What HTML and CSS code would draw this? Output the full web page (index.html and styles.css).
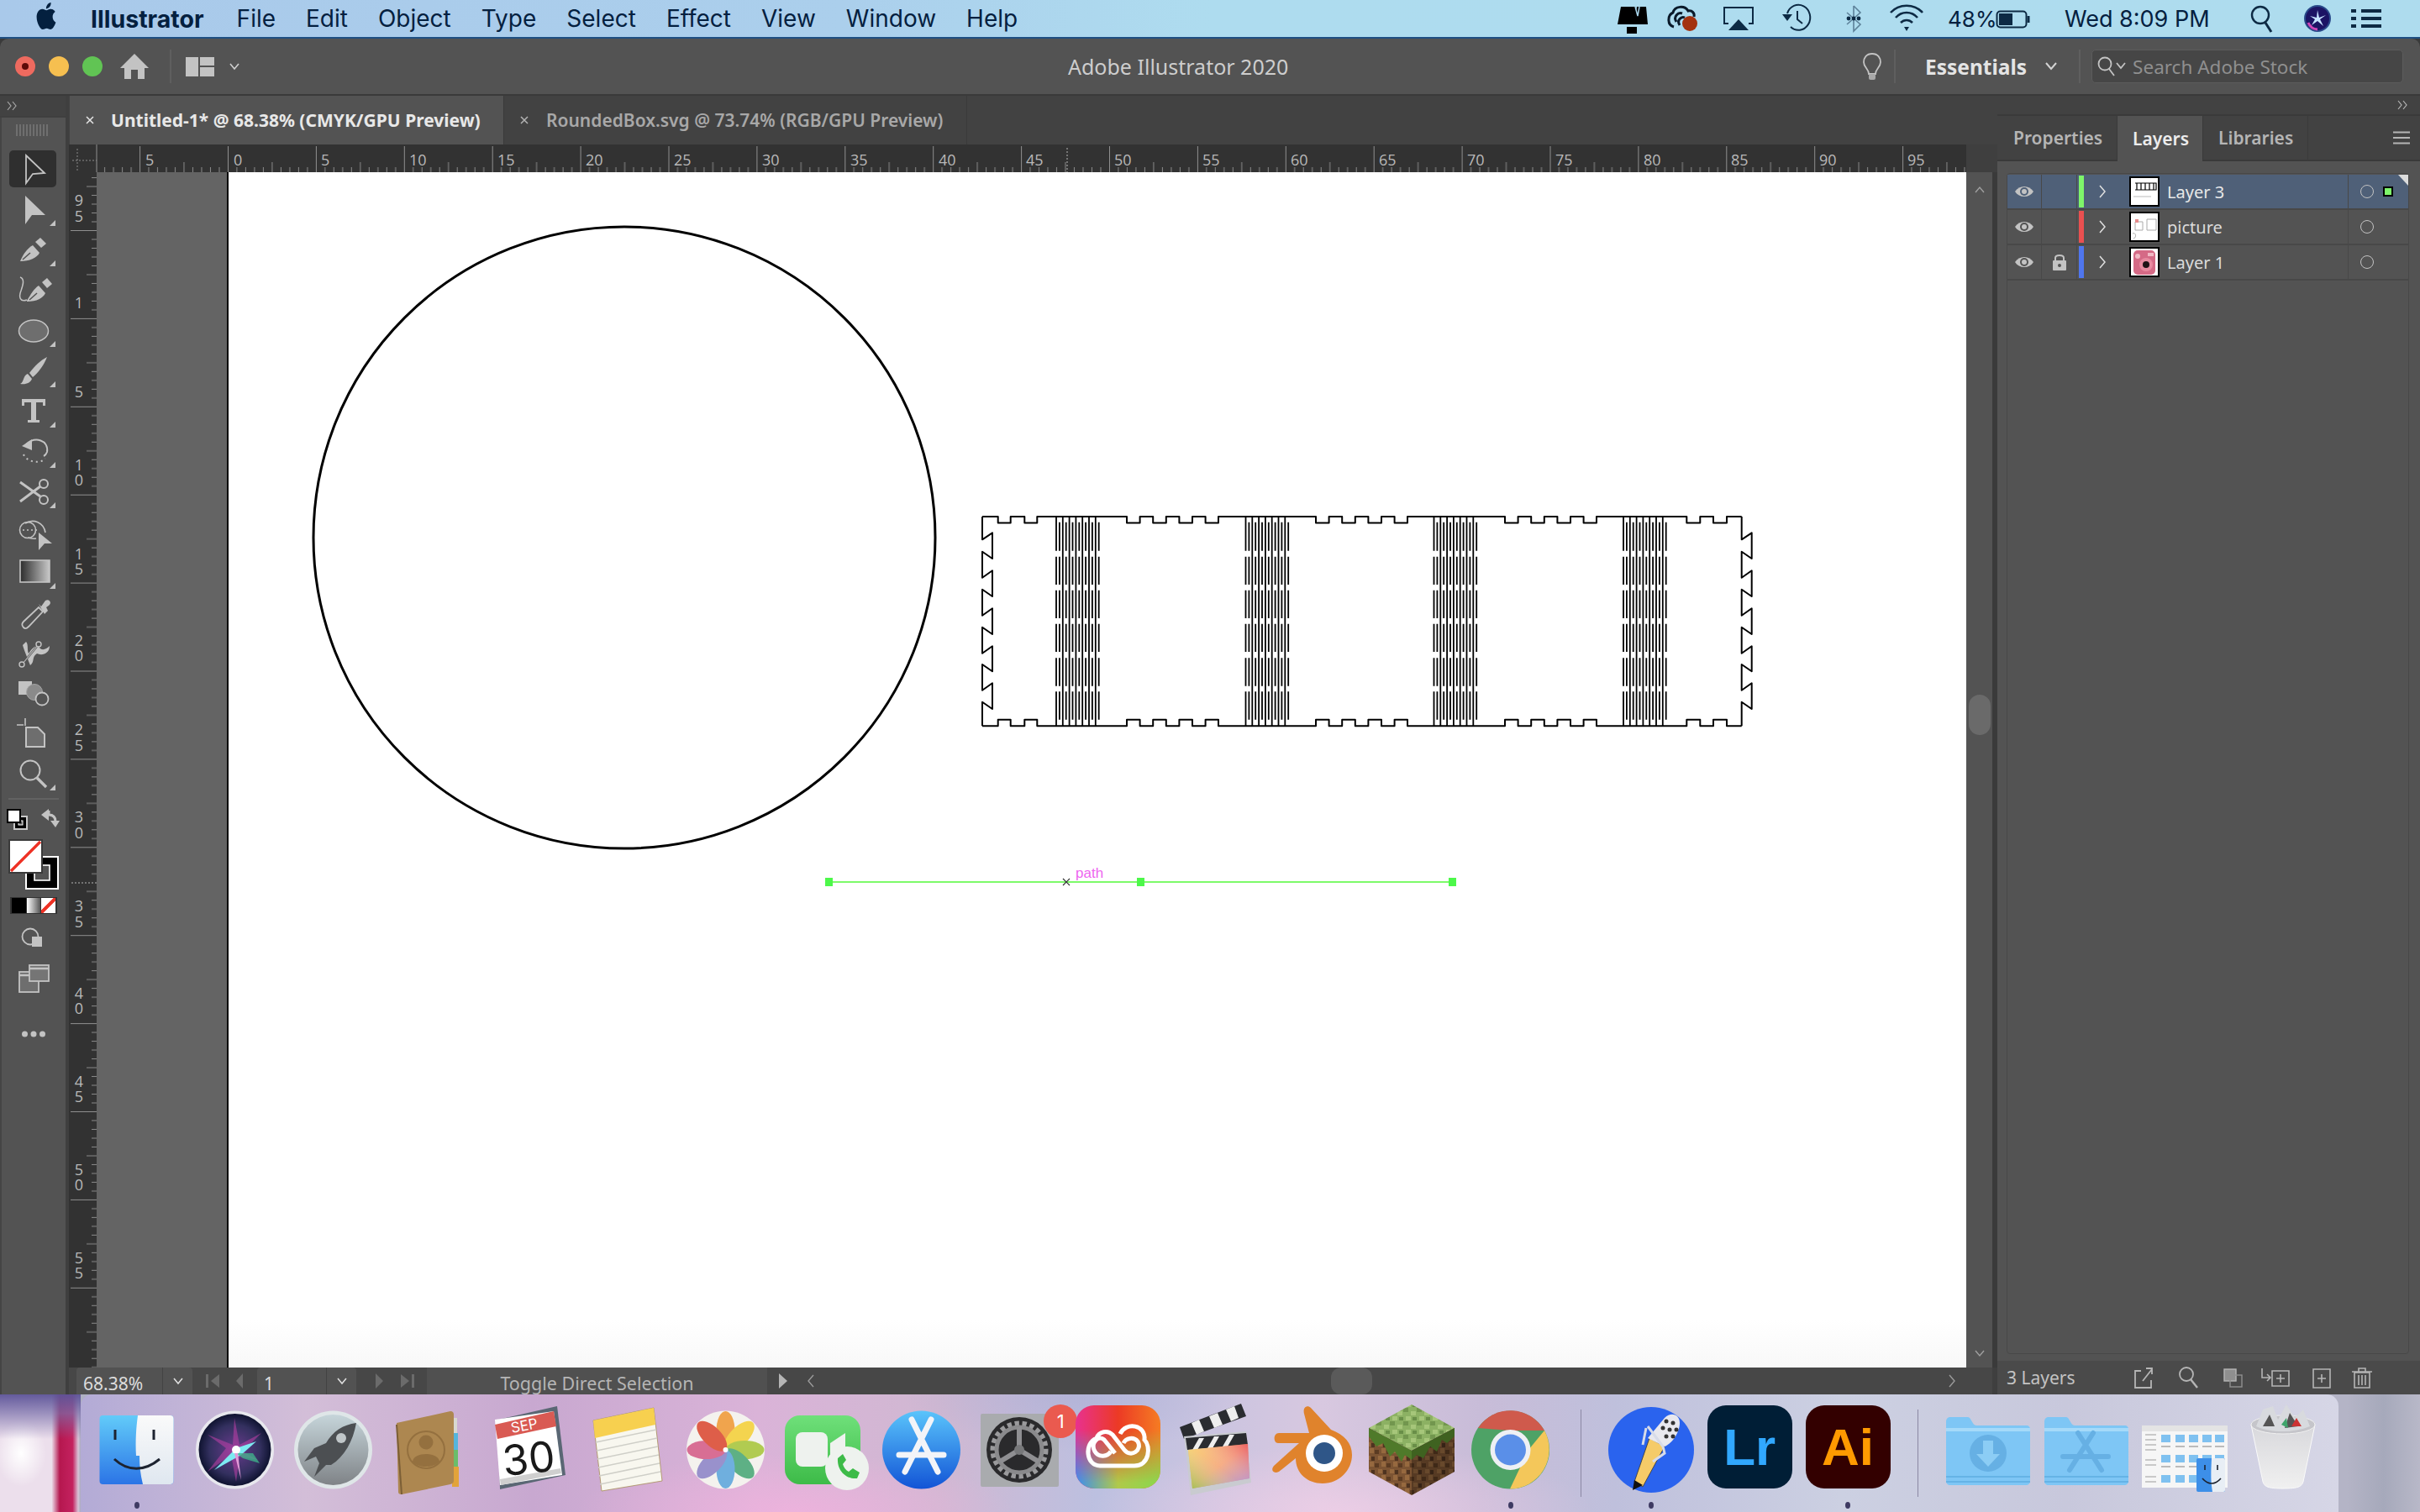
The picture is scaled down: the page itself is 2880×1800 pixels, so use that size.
FILE: index.html
```html
<!DOCTYPE html>
<html lang="en">
<head>
<meta charset="utf-8">
<title>Adobe Illustrator 2020</title>
<link rel="stylesheet" href="styles.css">
</head>
<body>
<svg class="defs" width="0" height="0">
  <defs>
    <symbol id="tri" viewBox="0 0 78 48"><polygon points="59,43 66,43 66,36" fill="#c3c3c3"/></symbol>
    <pattern id="hticks" x="271" y="172" width="104.9" height="33" patternUnits="userSpaceOnUse">
      <path d="M.5 2V33" stroke="#8f8f8f" fill="none"/>
      <path d="M10.9 27V33M21.4 27V33M31.9 27V33M42.4 27V33M52.9 21V33M63.4 27V33M73.9 27V33M84.4 27V33M94.9 27V33" stroke="#8a8a8a" fill="none"/>
    </pattern>
    <pattern id="vticks" x="82" y="274" width="33" height="104.9" patternUnits="userSpaceOnUse">
      <path d="M2 .5H33" stroke="#8f8f8f" fill="none"/>
      <path d="M27 10.9H33M27 21.4H33M27 31.9H33M27 42.4H33M21 52.9H33M27 63.4H33M27 73.9H33M27 84.4H33M27 94.9H33" stroke="#8a8a8a" fill="none"/>
    </pattern>
    <linearGradient id="toolgrad"><stop offset="0" stop-color="#2c2c2c"/><stop offset="1" stop-color="#c8c8c8"/></linearGradient>
  </defs>
</svg>

<header class="menubar">
  <svg class="apple" viewBox="0 0 24 24" width="28" height="32" preserveAspectRatio="none"><path fill="#04203f" d="M12.152 6.896c-.948 0-2.415-1.078-3.96-1.04-2.04.027-3.91 1.183-4.961 3.014-2.117 3.675-.546 9.103 1.519 12.09 1.013 1.454 2.208 3.09 3.792 3.039 1.52-.065 2.09-.987 3.935-.987 1.831 0 2.35.987 3.96.948 1.637-.026 2.676-1.48 3.676-2.948 1.156-1.688 1.636-3.325 1.662-3.415-.039-.013-3.182-1.221-3.22-4.857-.026-3.04 2.48-4.494 2.597-4.559-1.429-2.09-3.623-2.324-4.39-2.376-2-.156-3.675 1.09-4.61 1.09zM15.53 3.83c.843-1.012 1.4-2.427 1.245-3.83-1.207.052-2.662.805-3.532 1.818-.78.896-1.454 2.338-1.273 3.714 1.338.104 2.715-.688 3.559-1.701"/></svg>
  <nav class="menu">
    <span class="menu-app">Illustrator</span><span>File</span><span>Edit</span><span>Object</span><span>Type</span><span>Select</span><span>Effect</span><span>View</span><span>Window</span><span>Help</span>
  </nav>
  <div class="status-items">
    <svg width="62" height="44" viewBox="-31 -22 62 44"><path d="M-13-14H5L6-8V-14H17L19 7H-17Z" fill="#000"/><path d="M4-14L7-3 9-14" stroke="#a9d6ec" stroke-width="1.5" fill="none"/><rect x="-6" y="10" width="12" height="8" fill="#000"/></svg>
    <svg width="63" height="44" viewBox="-31 -22 63 44"><path d="M-12 10C-20 8-20-4-13-7-11-15 1-16 5-9 10-10 13-6 12-2" fill="none" stroke="#0a1a2a" stroke-width="3"/><path d="M-9 4C-13-2-7-8-2-6M-5 8C-9 2-3-3 1-1" fill="none" stroke="#0a1a2a" stroke-width="3"/><circle cx="7" cy="6" r="9" fill="#a3320f"/></svg>
    <svg width="67" height="44" viewBox="-33 -22 67 44"><path d="M-12 6H-17V-13H17V6H12" fill="none" stroke="#0d2a44" stroke-width="2"/><polygon points="0,1 12,14 -12,14" fill="#0d2a44"/></svg>
    <svg width="70" height="44" viewBox="-35 -22 70 44"><path d="M-11-6A14 15 0 1 1-7 10" fill="none" stroke="#0d2a44" stroke-width="2"/><polygon points="-17,-5 -5,-5 -11,3" fill="#0d2a44"/><path d="M1-9V1L7 6" fill="none" stroke="#0d2a44" stroke-width="2"/></svg>
    <svg width="66" height="44" viewBox="-33 -22 66 44"><path d="M0-15V15L8 7-8-7M0-15L8-7-8 7" fill="none" stroke="#5d8199" stroke-width="1.6"/><circle cx="-6" cy="0" r="2.4" fill="#0d2a44"/><circle cx="0" cy="0" r="2.4" fill="#0d2a44"/><circle cx="6" cy="0" r="2.4" fill="#0d2a44"/></svg>
    <svg width="60" height="44" viewBox="-30 -22 60 44"><path d="M-19-7C-9-18 9-18 19-7M-13-1C-6-9 6-9 13-1M-7 5C-3 1 3 1 7 5" fill="none" stroke="#0d2a44" stroke-width="2.6"/><polygon points="-3,10 3,10 0,15" fill="#0d2a44"/></svg>
    <span class="batt-pct">48%</span>
    <svg class="batt" width="42" height="26" viewBox="0 0 42 26"><rect x="1.5" y="4.5" width="35" height="19" rx="4" fill="none" stroke="#0d2a44" stroke-width="2"/><rect x="4" y="7" width="16" height="14" fill="#0d2a44"/><path d="M39 10V18" stroke="#0d2a44" stroke-width="3"/></svg>
    <span class="clock">Wed 8:09 PM</span>
    <svg width="64" height="44" viewBox="-32 -22 64 44"><circle cx="-2" cy="-4" r="10" fill="none" stroke="#0d2a44" stroke-width="2.4"/><path d="M4 5L11 16" stroke="#0d2a44" stroke-width="3"/></svg>
    <svg width="68" height="44" viewBox="-34 -22 68 44"><circle r="15" fill="#1c1464"/><circle r="15" fill="none" stroke="#2a4a8a" stroke-width="2"/><path d="M0-10L2-1 10-4 3 1 7 9 0 3-7 8-3 1-9-3-1-1Z" fill="#c6e4ff"/><path d="M-11 5A13 13 0 0 0 0 13" stroke="#d046b8" stroke-width="3" fill="none"/></svg>
    <svg width="48" height="44" viewBox="-24 -22 48 44"><path d="M-6-9H18M-6 0H18M-6 9H18" stroke="#0d2a44" stroke-width="4"/><path d="M-18-9H-12M-18 0H-12M-18 9H-12" stroke="#0d2a44" stroke-width="4"/></svg>
  </div>
</header>

<div class="window">
  <div class="toolbar">
    <div class="lights"><i class="light red"></i><i class="light yellow"></i><i class="light green"></i></div>
    <svg class="home" width="38" height="32" viewBox="0 0 38 32"><path d="M19 1L36 18H31V31H23V20H15V31H7V18H2Z" fill="#c3c3c3"/></svg>
    <i class="bar-div"></i>
    <svg class="arrange" width="34" height="23" viewBox="0 0 34 23"><path d="M0 0H15V23H0ZM17 0H34V10H17ZM17 12H34V23H17Z" fill="#c3c3c3"/></svg>
    <svg class="chev-s" width="14" height="10" viewBox="0 0 14 10"><path d="M2 2L7 8 12 2" fill="none" stroke="#cfcfcf" stroke-width="1.6"/></svg>
    <div class="app-title">Adobe Illustrator 2020</div>
    <svg class="bulb" width="24" height="34" viewBox="0 0 24 34"><path d="M12 2C5 2 2 7 2 12C2 18 8 20 8 26H16C16 20 22 18 22 12C22 7 19 2 12 2Z" fill="none" stroke="#c3c3c3" stroke-width="1.8"/><rect x="8" y="26" width="8" height="7" rx="2" fill="#a9a9a9"/></svg>
    <i class="bar-div bulb-div"></i>
    <span class="workspace-name">Essentials</span>
    <svg class="ws-chev" width="16" height="12" viewBox="0 0 16 12"><path d="M2 2L8 9 14 2" fill="none" stroke="#d4d4d4" stroke-width="2"/></svg>
    <i class="bar-div ws-div"></i>
    <div class="stock">
      <svg width="36" height="28" viewBox="0 0 36 28"><circle cx="10" cy="11" r="7.5" fill="none" stroke="#c3c3c3" stroke-width="1.8"/><path d="M15 17L21 25M24 10L29 16 34 10" fill="none" stroke="#c3c3c3" stroke-width="1.8"/></svg>
      <span>Search Adobe Stock</span>
    </div>
  </div>

  <div class="workspace">
    <aside class="toolstrip">
      <div class="strip-head">
        <svg width="14" height="14" viewBox="0 0 14 14"><path d="M2 2L6 7 2 12M8 2L12 7 8 12" fill="none" stroke="#a8a8a8" stroke-width="1.2"/></svg>
      </div>
      <div class="tools">
        <svg class="grip" width="40" height="14" viewBox="0 0 40 14"><path d="M1 0V14M5 0V14M9 0V14M13 0V14M17 0V14M21 0V14M25 0V14M29 0V14M33 0V14M37 0V14" stroke="#7c7c7c" stroke-width="1.4"/></svg>
        <div class="tool active"><svg viewBox="0 0 78 48" width="78" height="48"><path d="M31 7L53 28 39 29 31 40Z" fill="none" stroke="#c3c3c3" stroke-width="1.8"/></svg></div>
        <div class="tool"><svg viewBox="0 0 78 48" width="78" height="48"><path d="M30 7L54 30 38 30 30 41Z" fill="#c3c3c3"/><use href="#tri"/></svg></div>
        <div class="tool"><svg viewBox="0 0 78 48" width="78" height="48"><path d="M24 37C28 28 32 22 39 18L47 27C44 33 35 37 24 37Z" fill="#c3c3c3"/><path d="M27 35L36 27" stroke="#535353" stroke-width="1.5"/><path d="M42 14L48 9 55 16 49 21Z" fill="#c3c3c3"/><use href="#tri"/></svg></div>
        <div class="tool"><svg viewBox="0 0 78 48" width="78" height="48"><path d="M32 36C37 28 40 22 46 18L54 27C51 33 44 37 32 37Z" fill="#c3c3c3"/><path d="M35 35L44 27" stroke="#535353" stroke-width="1.5"/><path d="M50 14L56 9 62 16 56 21Z" fill="#c3c3c3"/><path d="M24 8C30 10 27 18 25 24 22 32 24 38 32 35" fill="none" stroke="#c3c3c3" stroke-width="1.5"/></svg></div>
        <div class="tool"><svg viewBox="0 0 78 48" width="78" height="48"><ellipse cx="40" cy="24" rx="17.5" ry="13" fill="#6e6e6e" stroke="#c3c3c3" stroke-width="1.5"/><use href="#tri"/></svg></div>
        <div class="tool"><svg viewBox="0 0 78 48" width="78" height="48"><path d="M56 7C52 17 46 25 39 31L35 26C41 18 48 11 56 7Z" fill="#c3c3c3"/><path d="M24 39C29 37 27 29 33 27L38 33C36 38 31 40 24 39Z" fill="#c3c3c3"/><use href="#tri"/></svg></div>
        <div class="tool"><svg viewBox="0 0 78 48" width="78" height="48"><path d="M26 9H54V17H51V13H43V34H47V37H33V34H37V13H29V17H26Z" fill="#c3c3c3"/><use href="#tri"/></svg></div>
        <div class="tool"><svg viewBox="0 0 78 48" width="78" height="48"><path d="M31 15C42 5 58 10 56 24 55 27 54 28 52 29" fill="none" stroke="#c3c3c3" stroke-width="2"/><polygon points="26,17 38,9 38,22" fill="#c3c3c3"/><path d="M28 27C32 36 47 39 54 32" fill="none" stroke="#c3c3c3" stroke-width="2" stroke-dasharray="2 4"/><use href="#tri"/></svg></div>
        <div class="tool"><svg viewBox="0 0 78 48" width="78" height="48"><circle cx="52" cy="14" r="5" fill="none" stroke="#c3c3c3" stroke-width="2"/><circle cx="52" cy="33" r="5" fill="none" stroke="#c3c3c3" stroke-width="2"/><path d="M24 12L48 29M24 35L48 17" stroke="#c3c3c3" stroke-width="3"/><use href="#tri"/></svg></div>
        <div class="tool"><svg viewBox="0 0 78 48" width="78" height="48"><circle cx="33" cy="21" r="9.5" fill="none" stroke="#c3c3c3" stroke-width="1.6"/><path d="M30 13C40 7 52 12 54 24M43 31C38 32 34 30 33 30" fill="none" stroke="#c3c3c3" stroke-width="1.6"/><path d="M27 21H45" stroke="#c3c3c3" stroke-width="1.5" stroke-dasharray="2 3"/><path d="M46 24L62 37 53 37 46 45Z" fill="#c3c3c3"/></svg></div>
        <div class="tool"><svg viewBox="0 0 78 48" width="78" height="48"><rect x="24" y="9" width="35" height="26" fill="url(#toolgrad)" stroke="#c3c3c3" stroke-width="1.6"/><use href="#tri"/></svg></div>
        <div class="tool"><svg viewBox="0 0 78 48" width="78" height="48"><path d="M28 41C25 38 26 36 28 34L46 17 51 22 34 40C32 42 30 43 28 41Z" fill="none" stroke="#c3c3c3" stroke-width="1.8"/><path d="M46 13L49 16 54 9C57 7 60 9 60 12 59 15 56 16 55 17L57 21 53 25Z" fill="#c3c3c3"/></svg></div>
        <div class="tool"><svg viewBox="0 0 78 48" width="78" height="48"><path d="M31 10C34 13 32 19 34 24 38 18 43 12 47 17 50 21 55 19 59 15 59 24 50 27 44 24 37 29 42 33 36 38 32 28 28 18 27 14Z" fill="#c3c3c3"/><path d="M27 36L46 13" stroke="#535353" stroke-width="2.4"/><path d="M27 36L46 13" stroke="#c3c3c3" stroke-width="1.1"/><circle cx="26" cy="37" r="3" fill="#535353" stroke="#c3c3c3" stroke-width="1.4"/><circle cx="46" cy="13" r="3" fill="#535353" stroke="#c3c3c3" stroke-width="1.4"/></svg></div>
        <div class="tool"><svg viewBox="0 0 78 48" width="78" height="48"><rect x="22" y="9" width="16" height="16" fill="#c3c3c3"/><circle cx="41" cy="22" r="9.5" fill="#8a8a8a" stroke="#a5a5a5" stroke-width="1"/><circle cx="50" cy="30" r="7.5" fill="#535353" stroke="#c3c3c3" stroke-width="1.8"/></svg></div>
        <div class="tool"><svg viewBox="0 0 78 48" width="78" height="48"><path d="M31 16H45L53 24V39H31Z" fill="#6e6e6e" stroke="#c3c3c3" stroke-width="2"/><path d="M30 5V14M20 13H28" stroke="#c3c3c3" stroke-width="1.6"/></svg></div>
        <div class="tool"><svg viewBox="0 0 78 48" width="78" height="48"><circle cx="36" cy="19" r="11.5" fill="none" stroke="#c3c3c3" stroke-width="2"/><path d="M44 28L55 39" stroke="#c3c3c3" stroke-width="3.4"/><use href="#tri"/></svg></div>
        <i class="tool-sep"></i>
        <div class="swap-row">
          <svg width="26" height="26" viewBox="0 0 26 26"><rect x="9" y="9" width="15" height="15" fill="#000" stroke="#c8c8c8" stroke-width="2"/><rect x="14" y="14" width="5" height="5" fill="#535353" stroke="#fff" stroke-width="1"/><rect x="1" y="1" width="15" height="15" fill="#fff" stroke="#000" stroke-width="2"/></svg>
          <svg width="24" height="24" viewBox="0 0 24 24"><path d="M10 2V7C16 7 18 10 18 15" fill="none" stroke="#c3c3c3" stroke-width="3"/><path d="M1 7L10 0V14ZM12 14H23L18 22Z" fill="#c3c3c3"/></svg>
        </div>
        <div class="fillstroke">
          <svg width="60" height="60" viewBox="0 0 60 60"><rect x="21" y="21" width="38" height="38" fill="#000" stroke="#fff" stroke-width="2"/><rect x="31" y="31" width="18" height="18" fill="#535353" stroke="#fff" stroke-width="1.6"/><rect x="1" y="1" width="39" height="39" fill="#fff" stroke="#3a3a3a" stroke-width="2"/><path d="M3 38L38 3" stroke="#ee3124" stroke-width="3.4"/></svg>
        </div>
        <div class="colormodes"><i class="cm cm-black"></i><i class="cm cm-grad"></i><i class="cm cm-none"></i></div>
        <div class="tool small"><svg viewBox="0 0 78 48" width="78" height="48"><circle cx="36" cy="22" r="9.5" fill="none" stroke="#c3c3c3" stroke-width="1.8"/><rect x="38" y="22" width="12" height="12" fill="#c3c3c3"/></svg></div>
        <div class="tool"><svg viewBox="0 0 78 48" width="78" height="48"><rect x="23" y="16" width="23" height="24" fill="#6e6e6e" stroke="#c3c3c3" stroke-width="1.8"/><rect x="35" y="8" width="23" height="19" fill="#757575" stroke="#c3c3c3" stroke-width="1.8"/><path d="M35 12H58M23 20H35" stroke="#c3c3c3" stroke-width="2.5"/></svg></div>
        <div class="tool dots"><svg viewBox="0 0 78 48" width="78" height="48"><circle cx="29.500" cy="24" r="3.500" fill="#c3c3c3"/><circle cx="40" cy="24" r="3.500" fill="#c3c3c3"/><circle cx="50.500" cy="24" r="3.500" fill="#c3c3c3"/></svg></div>
      </div>
    </aside>

    <section class="doc">
      <div class="tabs">
        <div class="tab tab-active">
          <svg width="12" height="12" viewBox="0 0 12 12"><path d="M2 2L10 10M10 2L2 10" stroke="#e6e6e6" stroke-width="1.5"/></svg>
          <span>Untitled-1* @ 68.38% (CMYK/GPU Preview)</span>
        </div>
        <div class="tab tab-idle">
          <svg width="12" height="12" viewBox="0 0 12 12"><path d="M2 2L10 10M10 2L2 10" stroke="#b5b5b5" stroke-width="1.5"/></svg>
          <span>RoundedBox.svg @ 73.74% (RGB/GPU Preview)</span>
        </div>
      </div>
      <svg class="hruler" width="2258" height="33" viewBox="82 172 2258 33">
        <rect x="82" y="172" width="2258" height="33" fill="#323232"/>
        <rect x="115" y="172" width="2225" height="33" fill="url(#hticks)"/>
        <rect x="82" y="172" width="33" height="33" fill="#323232"/>
        <path d="M92 177V205M86 191H115" stroke="#8a8a8a" stroke-dasharray="2 2" fill="none"/>
        <path d="M115 172V205" stroke="#8f8f8f"/>
        <path d="M1270 172V205" stroke="#323232" stroke-width="2"/>
        <path d="M1270 176V205" stroke="#b5b5b5" stroke-dasharray="2 2"/>
        <g class="rlabels">
          <text x="173" y="197">5</text><text x="278" y="197">0</text><text x="382" y="197">5</text><text x="487" y="197">10</text><text x="592" y="197">15</text><text x="697" y="197">20</text><text x="802" y="197">25</text><text x="907" y="197">30</text><text x="1012" y="197">35</text><text x="1117" y="197">40</text><text x="1221" y="197">45</text><text x="1326" y="197">50</text><text x="1431" y="197">55</text><text x="1536" y="197">60</text><text x="1641" y="197">65</text><text x="1746" y="197">70</text><text x="1851" y="197">75</text><text x="1956" y="197">80</text><text x="2060" y="197">85</text><text x="2165" y="197">90</text><text x="2270" y="197">95</text>
        </g>
      </svg>
      <div class="canvas-row">
        <svg class="vruler" width="33" height="1423" viewBox="82 205 33 1423">
          <rect x="82" y="205" width="33" height="1423" fill="#323232"/>
          <rect x="82" y="205" width="33" height="1423" fill="url(#vticks)"/>
          <path d="M82 1051H115" stroke="#323232" stroke-width="2"/>
          <path d="M85 1051H115" stroke="#b5b5b5" stroke-dasharray="2 2"/>
          <g class="rlabels rlabels-v">
            <text x="94" y="245">9</text><text x="94" y="264">5</text>
            <text x="94" y="367">1</text>
            <text x="94" y="473">5</text>
            <text x="94" y="560">1</text><text x="94" y="578">0</text>
            <text x="94" y="666">1</text><text x="94" y="684">5</text>
            <text x="94" y="769">2</text><text x="94" y="787">0</text>
            <text x="94" y="875">2</text><text x="94" y="894">5</text>
            <text x="94" y="979">3</text><text x="94" y="998">0</text>
            <text x="94" y="1085">3</text><text x="94" y="1104">5</text>
            <text x="94" y="1189">4</text><text x="94" y="1207">0</text>
            <text x="94" y="1294">4</text><text x="94" y="1312">5</text>
            <text x="94" y="1399">5</text><text x="94" y="1417">0</text>
            <text x="94" y="1504">5</text><text x="94" y="1522">5</text>
          </g>
        </svg>
        <div class="pasteboard"></div>
        <div class="artboard">
          <svg width="2068" height="1423" viewBox="272 205 2068 1423">
            <defs>
              <path id="bcol" d="M1260.900 621.700V655.700M1260.900 662.700V696M1260.900 702.700V736M1260.900 742.700V776M1260.900 783.300V816.700M1260.900 823.300V856.800"/>
              <g id="hinge">
                <path d="M1257 615V655.700M1257 662.700V696M1257 702.700V736M1257 742.700V776M1257 783.300V816.700M1257 823.300V864.300M1264.800 615V864.300M1272.600 615V864.300M1280.400 615V864.300M1288.200 615V864.300M1296 615V864.300M1303.800 615V864.300"/>
                <use href="#bcol"/><use href="#bcol" x="7.800"/><use href="#bcol" x="15.600"/><use href="#bcol" x="23.400"/><use href="#bcol" x="31.200"/><use href="#bcol" x="39"/><use href="#bcol" x="46.800"/>
              </g>
              <path id="wave" d="M1169 615V642.300L1181 634.300V665L1169 656.700V687.700L1181 679.300V710L1169 701.700V732.700L1181 724.300V755L1169 746.700V777.700L1181 769.300V799.300L1169 791V821.700L1181 813.300V844L1169 835.700V864.300"/>
            </defs>
            <circle cx="743" cy="640" r="370" fill="none" stroke="#000" stroke-width="3"/>
            <g class="art-lines">
              <path d="M1169 615H1187.700V622.500H1202.700V615H1219.300V622.500H1234.300V615H1341V622.500H1356.600V615H1372.200V622.500H1387.800V615H1403.400V622.500H1419V615H1434.600V622.500H1450V615H1566V622.500H1581.600V615H1597.200V622.500H1612.800V615H1628.400V622.500H1644V615H1659.600V622.500H1675V615H1791V622.500H1806.600V615H1822.200V622.500H1837.800V615H1853.400V622.500H1869V615H1884.600V622.500H1900V615H2007.300V622.500H2023.300V615H2039V622.500H2055V615H2072.700"/>
              <path d="M1169 864.300H1187.700V856.800H1202.700V864.300H1219.300V856.800H1234.300V864.300H1341V856.800H1356.600V864.300H1372.200V856.800H1387.800V864.300H1403.400V856.800H1419V864.300H1434.600V856.800H1450V864.300H1566V856.800H1581.600V864.300H1597.200V856.800H1612.800V864.300H1628.400V856.800H1644V864.300H1659.600V856.800H1675V864.300H1791V856.800H1806.600V864.300H1822.200V856.800H1837.800V864.300H1853.400V856.800H1869V864.300H1884.600V856.800H1900V864.300H2007.300V856.800H2023.300V864.300H2039V856.800H2055V864.300H2072.700"/>
              <use href="#wave"/>
              <use href="#wave" x="903.700"/>
              <g class="hinges"><use href="#hinge"/><use href="#hinge" x="225.500"/><use href="#hinge" x="449.500"/><use href="#hinge" x="675"/></g>
            </g>
            <path d="M987 1050H1728" stroke="#7dfa6a" stroke-width="2"/>
            <path d="M982 1045H991V1055H982ZM1353 1045H1362V1055H1353ZM1724 1045H1733V1055H1724Z" fill="#4df84a"/>
            <path d="M1265 1046L1273 1054M1273 1046L1265 1054" stroke="#333" stroke-width="1.200"/>
            <text class="smart-label" x="1280" y="1045">path</text>
          </svg>
        </div>
        <div class="vscroll">
          <svg width="14" height="10" viewBox="0 0 14 10"><path d="M2 8L7 2 12 8" fill="none" stroke="#a0a0a0" stroke-width="1.4"/></svg>
          <i class="vthumb"></i>
          <svg width="14" height="10" viewBox="0 0 14 10"><path d="M2 2L7 8 12 2" fill="none" stroke="#a0a0a0" stroke-width="1.4"/></svg>
        </div>
      </div>
      <div class="statusbar">
        <div class="field field-zoom"><span>68.38%</span></div>
        <div class="field-dd"><svg width="14" height="10" viewBox="0 0 14 10"><path d="M2 2L7 8 12 2" fill="none" stroke="#e0e0e0" stroke-width="1.500"/></svg></div>
        <svg class="nav-a" width="50" height="20" viewBox="0 0 50 20"><path d="M0 2H3V18H0ZM16 2V18L6 10ZM44 1V19L36 10Z" fill="#6b6b6b"/></svg>
        <div class="field field-page"><span>1</span></div>
        <div class="field-dd"><svg width="14" height="10" viewBox="0 0 14 10"><path d="M2 2L7 8 12 2" fill="none" stroke="#e0e0e0" stroke-width="1.500"/></svg></div>
        <svg class="nav-b" width="50" height="20" viewBox="0 0 50 20"><path d="M1 1V19L10 10ZM31 2V18L41 10ZM44 2H47V18H44Z" fill="#6b6b6b"/></svg>
        <div class="status-msg">Toggle Direct Selection</div>
        <svg class="msg-arrow" width="12" height="20" viewBox="0 0 12 20"><path d="M1 1V19L11 10Z" fill="#b5b5b5"/></svg>
        <svg class="hs-left" width="10" height="18" viewBox="0 0 10 18"><path d="M8 2L2 9 8 16" fill="none" stroke="#9a9a9a" stroke-width="1.400"/></svg>
        <div class="hscroll"><i class="hthumb"></i></div>
        <svg class="hs-right" width="10" height="18" viewBox="0 0 10 18"><path d="M2 2L8 9 2 16" fill="none" stroke="#9a9a9a" stroke-width="1.400"/></svg>
      </div>
    </section>

    <aside class="panels">
      <div class="panel-head">
        <svg width="14" height="14" viewBox="0 0 14 14"><path d="M2 2L6 7 2 12M8 2L12 7 8 12" fill="none" stroke="#b5b5b5" stroke-width="1.200"/></svg>
      </div>
      <div class="panel-tabs">
        <span class="ptab">Properties</span>
        <span class="ptab ptab-active">Layers</span>
        <span class="ptab ptab-lib">Libraries</span>
        <svg class="pmenu" width="20" height="16" viewBox="0 0 20 16"><path d="M0 1.500H20M0 8H20M0 14.500H20" stroke="#b5b5b5" stroke-width="1.800"/></svg>
      </div>
      <div class="layers">
        <div class="layer layer-sel">
          <div class="cell"><svg width="24" height="16" viewBox="0 0 24 16"><path d="M1 8C6 0 18 0 23 8 18 16 6 16 1 8Z" fill="#c3c3c3"/><circle cx="12" cy="8" r="5" fill="#4f6078"/><circle cx="12" cy="8" r="3" fill="#c3c3c3"/></svg></div>
          <div class="cell"></div>
          <div class="cell cell-tw"><i class="swatch sw-green"></i><svg width="10" height="18" viewBox="0 0 10 18"><path d="M2 2L8 9 2 16" fill="none" stroke="#e0e0e0" stroke-width="1.500"/></svg></div>
          <svg class="thumb" width="36" height="36" viewBox="0 0 36 36"><rect width="36" height="36" fill="#000"/><rect x="2" y="2" width="32" height="32" fill="#fff"/><path d="M7 8H32V16H7M9 8V16M14 8V16M19 8V16M24 8V16M29 8V16" fill="none" stroke="#000" stroke-width="1.200"/><path d="M5 24H26" stroke="#bbb"/></svg>
          <span class="lname">Layer 3</span>
          <div class="cell cell-target"><i class="target"></i><i class="sel-mark"></i></div>
          <i class="corner"></i>
        </div>
        <div class="layer">
          <div class="cell"><svg width="24" height="16" viewBox="0 0 24 16"><path d="M1 8C6 0 18 0 23 8 18 16 6 16 1 8Z" fill="#c3c3c3"/><circle cx="12" cy="8" r="5" fill="#535353"/><circle cx="12" cy="8" r="3" fill="#c3c3c3"/></svg></div>
          <div class="cell"></div>
          <div class="cell cell-tw"><i class="swatch sw-red"></i><svg width="10" height="18" viewBox="0 0 10 18"><path d="M2 2L8 9 2 16" fill="none" stroke="#e0e0e0" stroke-width="1.500"/></svg></div>
          <svg class="thumb" width="36" height="36" viewBox="0 0 36 36"><rect width="36" height="36" fill="#000"/><rect x="2" y="2" width="32" height="32" fill="#fff"/><path d="M7 12H16V22H7ZM21 9H32V22H21ZM4 26C8 24 9 31 5 32" fill="none" stroke="#aaa"/><rect x="7" y="9" width="4" height="4" fill="#e58a8a"/></svg>
          <span class="lname">picture</span>
          <div class="cell cell-target"><i class="target"></i></div>
        </div>
        <div class="layer">
          <div class="cell"><svg width="24" height="16" viewBox="0 0 24 16"><path d="M1 8C6 0 18 0 23 8 18 16 6 16 1 8Z" fill="#c3c3c3"/><circle cx="12" cy="8" r="5" fill="#535353"/><circle cx="12" cy="8" r="3" fill="#c3c3c3"/></svg></div>
          <div class="cell"><svg width="18" height="22" viewBox="0 0 18 22"><path d="M4 10V6C4 2 14 2 14 6V10" fill="none" stroke="#c3c3c3" stroke-width="2"/><rect x="1" y="9" width="16" height="12" rx="1" fill="#c3c3c3"/><circle cx="9" cy="15" r="2" fill="#535353"/></svg></div>
          <div class="cell cell-tw"><i class="swatch sw-blue"></i><svg width="10" height="18" viewBox="0 0 10 18"><path d="M2 2L8 9 2 16" fill="none" stroke="#e0e0e0" stroke-width="1.500"/></svg></div>
          <svg class="thumb" width="36" height="36" viewBox="0 0 36 36"><rect width="36" height="36" fill="#000"/><rect x="2" y="2" width="32" height="32" fill="#fff"/><rect x="5" y="4" width="26" height="29" rx="5" fill="#d56a86"/><circle cx="20" cy="21" r="8" fill="#e78aa0"/><circle cx="20" cy="21" r="4" fill="#1f1216"/><circle cx="10" cy="11" r="3" fill="#f0b8c4"/><rect x="22" y="7" width="7" height="4" fill="#f0b8c4"/></svg>
          <span class="lname">Layer 1</span>
          <div class="cell cell-target"><i class="target"></i></div>
        </div>
      </div>
      <div class="panel-foot">
        <span>3 Layers</span>
        <svg class="fi" width="53" height="26" viewBox="-26 -13 53 26"><path d="M-3-8H-10V12H9V3M-1 4L10-10M3-11H10V-4" fill="none" stroke="#b5b5b5" stroke-width="1.800"/></svg>
        <svg class="fi" width="53" height="26" viewBox="-26 -13 53 26"><circle cx="-2" cy="-4" r="8" fill="none" stroke="#b5b5b5" stroke-width="1.800"/><path d="M3 2L11 12" stroke="#b5b5b5" stroke-width="2.400"/></svg>
        <svg class="fi" width="53" height="26" viewBox="-26 -13 53 26"><rect x="-10" y="-10" width="14" height="14" fill="#8f8f8f" stroke="#b5b5b5" stroke-width="1.400"/><rect x="-3" y="-3" width="14" height="14" fill="none" stroke="#8f8f8f" stroke-width="1.400"/></svg>
        <svg class="fi" width="53" height="26" viewBox="-26 -13 53 26"><path d="M-18-11V0H-9M-12-4L-8 0-12 4" fill="none" stroke="#b5b5b5" stroke-width="1.600"/><path d="M-6-8H14V10H-6ZM4-4V6M-1 1H9" fill="none" stroke="#b5b5b5" stroke-width="1.600"/></svg>
        <svg class="fi" width="53" height="26" viewBox="-26 -13 53 26"><path d="M-10-10H10V12H-10ZM0-4V6M-5 1H5" fill="none" stroke="#b5b5b5" stroke-width="1.600"/></svg>
        <svg class="fi" width="53" height="26" viewBox="-21 -13 53 26"><path d="M-9-6H9V12H-9ZM-12-7H12M-4-7V-11H4V-7M-4-3V9M0-3V9M4-3V9" fill="none" stroke="#b5b5b5" stroke-width="1.600"/></svg>
      </div>
    </aside>
  </div>
</div>

<footer class="desk">
  <div class="dock">
    <!-- Finder -->
    <div class="app running"><svg viewBox="0 0 117 140" width="117" height="140"><defs><linearGradient id="f1" x1="0" y1="0" x2="0" y2="1"><stop offset="0" stop-color="#62cbf9"/><stop offset="1" stop-color="#2b74e6"/></linearGradient><linearGradient id="f2" x1="0" y1="0" x2="0" y2="1"><stop offset="0" stop-color="#fafafa"/><stop offset="1" stop-color="#dfe7f0"/></linearGradient></defs><rect x="14.500" y="25" width="88" height="82" rx="4" fill="url(#f1)"/><path d="M60 25H98.500C101 25 102.500 26.500 102.500 29V103C102.500 105.500 101 107 98.500 107H66C63 95 62 85 62 73H58C57 55 58 40 60 25Z" fill="url(#f2)"/><path d="M33 42V54M79 42V54" stroke="#1d2330" stroke-width="3"/><path d="M32 77C48 92 68 92 86 77" fill="none" stroke="#1d2330" stroke-width="3"/></svg></div>
    <!-- Siri -->
    <div class="app"><svg viewBox="0 0 117 140" width="117" height="140"><defs><radialGradient id="s1"><stop offset="0" stop-color="#6a3b8e"/><stop offset=".7" stop-color="#33305f"/><stop offset="1" stop-color="#0f1330"/></radialGradient></defs><circle cx="58.500" cy="66" r="46.500" fill="#e8e8ee"/><circle cx="58.500" cy="66" r="43" fill="url(#s1)"/><path d="M58 28L64 60 90 46 68 68 86 78 64 74 60 104 54 72 26 92 48 64 26 48 56 60Z" fill="#c03fa8" opacity=".55"/><path d="M34 90L60 64 84 56 66 72Z" fill="#7deaf2"/><path d="M60 70L80 70 88 82 68 76Z" fill="#3fb08a" opacity=".8"/><circle cx="60" cy="66" r="5" fill="#fff"/><path d="M58 70L66 102 62 70Z" fill="#e29ad8"/></svg></div>
    <!-- Launchpad -->
    <div class="app"><svg viewBox="0 0 117 140" width="117" height="140"><defs><linearGradient id="l1" x1="0" y1="0" x2="0" y2="1"><stop offset="0" stop-color="#c6d5da"/><stop offset="1" stop-color="#7f8387"/></linearGradient></defs><circle cx="58.500" cy="66" r="46.500" fill="#dfe6e8"/><circle cx="58.500" cy="66" r="42" fill="url(#l1)"/><path d="M86 34C70 36 58 44 50 58L36 64 24 80 38 74 42 82 36 98 50 84 56 84C72 74 82 56 86 34Z" fill="#4c4f52"/><circle cx="68" cy="52" r="6" fill="#c0c6c8"/></svg></div>
    <!-- Contacts -->
    <div class="app"><svg viewBox="0 0 117 140" width="117" height="140"><rect x="82" y="28" width="8" height="20" fill="#d8d8d0"/><rect x="84" y="46" width="7" height="22" fill="#56b5dc"/><rect x="84" y="66" width="7" height="22" fill="#6bbd6a"/><rect x="84" y="86" width="8" height="24" fill="#e2a33a"/><path d="M18 34L82 20C85 20 86 22 86 24V102C86 105 85 106 82 107L24 119C21 119 20 118 20 116Z" fill="#ad8750"/><path d="M18 36L24 119" stroke="#7c5f36" stroke-width="2"/><circle cx="53" cy="66" r="22" fill="none" stroke="#94703f" stroke-width="2"/><circle cx="53" cy="57" r="8.500" fill="#94703f"/><path d="M37 80C38 68 68 68 69 80 62 88 44 88 37 80Z" fill="#94703f"/></svg></div>
    <!-- Calendar -->
    <div class="app"><svg viewBox="0 0 117 140" width="117" height="140"><path d="M22 30L92 14 102 96 24 113Z" fill="#5a6774"/><path d="M16 30L86 20 96 96 22 108Z" fill="#fff" transform="translate(2 0)"/><path d="M18 36L88 20 91 38 21 53Z" fill="#d95a53"/><path d="M24 101L96 88 97 94 25 108Z" fill="#cfcfcf"/><text class="cal-month" x="54" y="43" transform="rotate(-11 54 43)">SEP</text><text class="cal-day" x="60" y="94" transform="rotate(-6 60 94)">30</text></svg></div>
    <!-- Notes -->
    <div class="app"><svg viewBox="0 0 117 140" width="117" height="140"><path d="M18 31L90 16 100 103 28 115Z" fill="#f8f7ef" stroke="#a68d58" stroke-width=".8"/><path d="M18 31L90 16 92 36 20 52Z" fill="#f7d04f"/><path d="M21 57L93 42M22 67L94 52M23 77L95 62M24 87L96 72M25 97L97 82M26 107L98 92" stroke="#cfcfc8" stroke-width="1.500"/></svg></div>
    <!-- Photos -->
    <div class="app"><svg viewBox="0 0 117 140" width="117" height="140"><circle cx="58.500" cy="66" r="46.500" fill="#f4f2ee"/><g class="petals"><ellipse cx="58.500" cy="43" rx="11" ry="23" fill="#f09a37"/><ellipse cx="58.500" cy="43" rx="11" ry="23" fill="#f4d03a" transform="rotate(45 58.500 66)"/><ellipse cx="58.500" cy="43" rx="11" ry="23" fill="#a8c63c" transform="rotate(90 58.500 66)"/><ellipse cx="58.500" cy="43" rx="11" ry="23" fill="#4aa777" transform="rotate(135 58.500 66)"/><ellipse cx="58.500" cy="43" rx="11" ry="23" fill="#5da6dc" transform="rotate(180 58.500 66)"/><ellipse cx="58.500" cy="43" rx="11" ry="23" fill="#8d84c8" transform="rotate(225 58.500 66)"/><ellipse cx="58.500" cy="43" rx="11" ry="23" fill="#d55c88" transform="rotate(270 58.500 66)"/><ellipse cx="58.500" cy="43" rx="11" ry="23" fill="#dc4a33" transform="rotate(315 58.500 66)"/></g><circle cx="58.500" cy="66" r="3" fill="#fff"/></svg></div>
    <!-- FaceTime -->
    <div class="app"><svg viewBox="0 0 117 140" width="117" height="140"><defs><linearGradient id="ft" x1="0" y1="0" x2="0" y2="1"><stop offset="0" stop-color="#6fe07a"/><stop offset="1" stop-color="#3dbb48"/></linearGradient></defs><rect x="12" y="25" width="90" height="82" rx="18" fill="url(#ft)"/><rect x="25" y="45" width="38" height="41" rx="8" fill="#eef2ee"/><path d="M66 58L84 46V84L66 74Z" fill="#eef2ee"/><circle cx="86" cy="88" r="26" fill="#eef2ee"/><path d="M75 76C74 90 84 101 98 100L101 93 93 88 88 92C84 90 82 86 81 83L85 78 81 71Z" fill="#3dbb48"/></svg></div>
    <!-- App Store -->
    <div class="app"><svg viewBox="0 0 117 140" width="117" height="140"><defs><linearGradient id="as" x1="0" y1="0" x2="0" y2="1"><stop offset="0" stop-color="#5ac4fb"/><stop offset="1" stop-color="#1254d6"/></linearGradient></defs><circle cx="58.500" cy="66" r="46.500" fill="url(#as)"/><path d="M47 30L78 92M70 30L39 92" stroke="#f3f4f8" stroke-width="7" stroke-linecap="round" fill="none"/><path d="M32 72H85" stroke="#f3f4f8" stroke-width="7" stroke-linecap="round"/></svg></div>
    <!-- System Preferences -->
    <div class="app"><svg viewBox="0 0 117 140" width="117" height="140"><rect x="12" y="23" width="93" height="87" rx="2" fill="#a9abae"/><circle cx="58" cy="66" r="39" fill="#2a2a2c"/><circle cx="58" cy="66" r="30" fill="none" stroke="#9a9a9c" stroke-width="9" stroke-dasharray="5 3.500"/><circle cx="58" cy="66" r="27" fill="none" stroke="#8a8a8c" stroke-width="5"/><path d="M58 66V39M58 66L35 80M58 66L81 80" stroke="#8f8f92" stroke-width="6"/><circle cx="58" cy="66" r="6" fill="#77787a"/></svg><span class="badge">1</span></div>
    <!-- Creative Cloud -->
    <div class="app"><svg viewBox="0 0 117 140" width="117" height="140"><defs><linearGradient id="cc1" x1="0" y1="0" x2="1" y2="0"><stop offset="0" stop-color="#e8318f"/><stop offset=".5" stop-color="#ec3a25"/><stop offset="1" stop-color="#f57c23"/></linearGradient><linearGradient id="cc2" x1="0" y1="0" x2="1" y2="0"><stop offset="0" stop-color="#3b8df2"/><stop offset=".5" stop-color="#b0c94a"/><stop offset="1" stop-color="#89d84d"/></linearGradient><linearGradient id="ccv" x1="0" y1="0" x2="0" y2="1"><stop offset="0" stop-color="#000"/><stop offset=".3" stop-color="#000"/><stop offset=".75" stop-color="#fff"/></linearGradient><mask id="ccm"><rect width="117" height="140" fill="url(#ccv)"/></mask></defs><rect x="8" y="13" width="101" height="99" rx="22" fill="url(#cc1)"/><rect x="8" y="13" width="101" height="99" rx="22" fill="url(#cc2)" mask="url(#ccm)"/><path d="M70 85H37C20 85 18 58 33 52 36 44 46 42 52 48L66 66C74 76 88 66 82 56 77 50 68 52 65 58M55 70L42 54C35 48 25 58 31 68 36 76 46 74 50 68M61 47C68 32 92 36 90 54 98 62 96 85 78 85H68" fill="none" stroke="#fff" stroke-width="5"/></svg></div>
    <!-- Final Cut -->
    <div class="app"><svg viewBox="0 0 117 140" width="117" height="140"><defs><linearGradient id="fc" x1="0" y1="0" x2="1" y2="1"><stop offset="0" stop-color="#f7c23a"/><stop offset=".5" stop-color="#f28d50"/><stop offset="1" stop-color="#8e62c9"/></linearGradient><linearGradient id="fc2" x1="0" y1="1" x2="1" y2="0"><stop offset="0" stop-color="#86d24a"/><stop offset=".5" stop-color="#fff" stop-opacity=".4"/><stop offset="1" stop-color="#e94a62"/></linearGradient></defs><path d="M15 39L88 11 94 26 20 53Z" fill="#2a2c30"/><path d="M29 34L38 30 44 44 35 48ZM50 26L60 22 66 36 56 40ZM70 18L80 14 85 28 76 32Z" fill="#eee"/><path d="M20 50L94 44 100 105 28 120Z" fill="#c9cbd0"/><path d="M22 52L94 46 96 60 24 66Z" fill="#2a2c30"/><path d="M30 66L38 52H44L36 66ZM48 64L56 50H62L54 64ZM66 62L74 48H80L72 62Z" fill="#eee"/><path d="M25 66L96 59 98 100 30 112Z" fill="url(#fc)"/><path d="M25 66L96 59 98 100 30 112Z" fill="url(#fc2)" opacity=".75"/></svg></div>
    <!-- Blender -->
    <div class="app"><svg viewBox="0 0 117 140" width="117" height="140"><path d="M54 16L78 42C94 48 103 58 103 72 103 90 88 106 68 106 50 106 36 94 36 76L16 92C9 95 6 90 10 85L40 58H15C9 58 9 46 16 46H52L46 23C44 15 50 12 54 16Z" fill="#e0832c"/><circle cx="70" cy="70" r="22" fill="#fff"/><circle cx="70" cy="70" r="13" fill="#2f5688"/></svg></div>
    <!-- Minecraft -->
    <div class="app"><svg viewBox="0 0 117 140" width="117" height="140"><defs><pattern id="grass" width="16" height="16" patternUnits="userSpaceOnUse"><rect width="16" height="16" fill="#8cb163"/><rect x="0" y="0" width="6" height="5" fill="#72964e"/><rect x="9" y="4" width="6" height="5" fill="#a6c67a"/><rect x="3" y="10" width="6" height="5" fill="#a6c67a"/><rect x="11" y="11" width="5" height="4" fill="#698e48"/></pattern><pattern id="dirt" width="14" height="16" patternUnits="userSpaceOnUse"><rect width="14" height="16" fill="#7c5433"/><rect x="0" y="2" width="5" height="5" fill="#5b3b22"/><rect x="8" y="0" width="5" height="6" fill="#96693f"/><rect x="4" y="9" width="5" height="5" fill="#96693f"/><rect x="10" y="10" width="4" height="5" fill="#4e3320"/></pattern></defs><path d="M58 12L109 40 58 67 7 40Z" fill="url(#grass)"/><path d="M7 40L58 67V120L7 92Z" fill="url(#dirt)"/><path d="M58 67L109 40V92L58 120Z" fill="url(#dirt)"/><path d="M58 67L109 40V92L58 120Z" fill="#000" opacity=".3"/><path d="M7 40L58 67V78L50 72 46 80 38 68 32 74 24 58 16 62 7 50Z" fill="#4f7a2a"/><path d="M58 67L109 40V50L100 58 94 54 88 68 80 62 72 76 64 72 58 78Z" fill="#3f6220"/></svg></div>
    <!-- Chrome -->
    <div class="app running"><svg viewBox="0 0 117 140" width="117" height="140"><circle cx="58.500" cy="66" r="46.500" fill="#4ea266"/><path d="M20 40A46.500 47 0 0 1 99 43L58.500 43Z" fill="#cf5a4c"/><path d="M99 43A46.500 47 0 0 1 58 112.500L80 66Z" fill="#f4c75a"/><circle cx="58.500" cy="66" r="24" fill="#eef0f4"/><circle cx="58.500" cy="66" r="18.500" fill="#5a8fe8"/></svg></div>
    <i class="dock-sep"></i>
    <!-- Notability -->
    <div class="app running"><svg viewBox="0 0 117 140" width="117" height="140"><ellipse cx="51" cy="66" rx="51" ry="51" transform="translate(7 0)" fill="#2a63ee"/><path d="M38 104L56 52 74 62 48 110Z" fill="#f5cb68" stroke="#333" stroke-width=".8"/><path d="M36 114L38 102 48 108Z" fill="#111"/><path d="M54 52L74 28C82 20 92 24 92 34 92 44 84 58 74 62Z" fill="#e8e8ee"/><g fill="#333"><circle cx="76" cy="32" r="2.500"/><circle cx="84" cy="34" r="2.500"/><circle cx="72" cy="40" r="2.500"/><circle cx="80" cy="42" r="2.500"/><circle cx="88" cy="42" r="2.500"/><circle cx="76" cy="50" r="2.500"/><circle cx="84" cy="50" r="2.500"/></g><path d="M54 38L72 62 74 70 60 80M52 40L48 60" fill="none" stroke="#d7dbe8" stroke-width="3"/></svg></div>
    <!-- Lightroom -->
    <div class="app"><div class="adobe adobe-lr">Lr</div></div>
    <!-- Illustrator -->
    <div class="app running"><div class="adobe adobe-ai">Ai</div></div>
    <i class="dock-sep sep-b"></i>
    <!-- Downloads -->
    <div class="app"><svg viewBox="0 0 117 140" width="117" height="140"><path d="M8 33C8 29 10 27 13 27H34C38 27 39 37 44 37H103C107 37 108 39 108 42V103C108 106 106 108 103 108H13C10 108 8 106 8 103Z" fill="#7ec6f5"/><rect x="8" y="40" width="100" height="4" fill="#a6daf9"/><path d="M8 98H108M8 104H108" stroke="#65b3e6" stroke-width="2"/><circle cx="58" cy="70" r="22" fill="#66b0e4"/><path d="M52 55H64V71H72L58 86 44 71H52Z" fill="#8ccdf5"/></svg></div>
    <!-- Apps folder -->
    <div class="app"><svg viewBox="0 0 117 140" width="117" height="140"><path d="M8 33C8 29 10 27 13 27H34C38 27 39 37 44 37H103C107 37 108 39 108 42V103C108 106 106 108 103 108H13C10 108 8 106 8 103Z" fill="#7ec6f5"/><rect x="8" y="40" width="100" height="4" fill="#a6daf9"/><path d="M8 98H108M8 104H108" stroke="#65b3e6" stroke-width="2"/><path d="M48 46L76 90M66 46L38 90M30 74H84" stroke="#66b0e4" stroke-width="6" stroke-linecap="round" fill="none"/></svg></div>
    <!-- Recents stack -->
    <div class="app"><svg viewBox="0 0 117 140" width="117" height="140"><rect x="7" y="37" width="102" height="74" fill="#f6f6f6"/><path d="M7 37H109V44H7Z" fill="#e4e4e4"/><path d="M11 48H24M11 54H24M11 60H24M11 66H24M11 78H24M11 84H24M11 98H24M11 104H24" stroke="#c9c9c9" stroke-width="2"/><g fill="#7fc1f0"><rect x="30" y="48" width="11" height="9"/><rect x="47" y="48" width="11" height="9"/><rect x="63" y="48" width="11" height="9"/><rect x="79" y="48" width="11" height="9"/><rect x="94" y="48" width="11" height="9"/><rect x="30" y="72" width="11" height="9"/><rect x="47" y="72" width="11" height="9"/><rect x="63" y="72" width="11" height="9"/><rect x="79" y="72" width="11" height="9"/><rect x="94" y="72" width="11" height="9"/><rect x="30" y="96" width="11" height="9"/><rect x="47" y="96" width="11" height="9"/><rect x="63" y="96" width="11" height="9"/></g><path d="M30 62H41M47 62H58M63 62H74M79 62H90M94 62H105M30 86H41M47 86H58M63 86H74M79 86H90M94 86H105" stroke="#bbb" stroke-width="2"/><rect x="72" y="76" width="34" height="40" rx="2" fill="#3d8fe8"/><path d="M90 76H104C105 76 106 77 106 78V114C106 115 105 116 104 116H91C89 104 89 96 90 76Z" fill="#e8eef5"/><path d="M82 84V90M97 84V90M79 100C86 108 94 108 101 100" fill="none" stroke="#1d2330" stroke-width="1.600"/></svg></div>
    <!-- Trash -->
    <div class="app"><svg viewBox="0 0 117 140" width="117" height="140"><defs><linearGradient id="tr" x1="0" y1="0" x2="0" y2="1"><stop offset="0" stop-color="#d8d8dc"/><stop offset="1" stop-color="#f0f0f0"/></linearGradient></defs><path d="M20 36L34 104C36 110 40 112 58 112 76 112 80 110 82 104L96 36Z" fill="url(#tr)" stroke="#fafafa"/><ellipse cx="58" cy="36" rx="38" ry="11" fill="#c5c5ca" stroke="#f0f0f0"/><path d="M26 38L34 18 46 14 52 30 62 12 72 28 82 18 90 38C70 46 44 46 26 38Z" fill="#d8dade"/><path d="M34 38L42 24 48 38ZM60 40L66 22 76 38Z" fill="#555"/><path d="M56 36L62 28 64 40Z" fill="#3fa56c"/><path d="M68 38L74 28 80 38Z" fill="#c33"/></svg></div>
  </div>
</footer>
</body>
</html>
```

FILE: styles.css
```css
* { box-sizing: border-box; }
html, body { margin: 0; padding: 0; }
body {
  width: 2880px;
  height: 1800px;
  overflow: hidden;
  display: flex;
  flex-direction: column;
  background: #3a3a3a;
  font-family: "Noto Sans", "Open Sans", sans-serif;
}
svg { display: block; flex: none; }
i { display: block; font-style: normal; }
.defs { position: absolute; }

/* macOS menu bar */
.menubar {
  height: 46px;
  flex: none;
  display: flex;
  align-items: center;
  padding-right: 40px;
  border-bottom: 2px solid #1f4f82;
  background: linear-gradient(90deg, #a9c9ea 0%, #abcfec 35%, #aedcef 50%, #aedcee 100%);
  font-family: "Inter", "Liberation Sans", sans-serif;
  color: #04203f;
  font-size: 28px;
}
.apple { margin-left: 41px; margin-top: -6px; }
.menu { display: flex; gap: 36px; margin-left: 39px; }
.menu-app { font-weight: 700; font-size: 28.5px; margin-right: 3px; }
.status-items { margin-left: auto; display: flex; align-items: center; }
.batt-pct { margin-left: 19px; width: 57px; font-size: 26px; }
.clock { margin-left: 40px; width: 203px; font-size: 27px; }

/* application frame */
.window { flex: 1; min-height: 0; display: flex; flex-direction: column; background: #3a3a3a; }
.toolbar {
  height: 68px;
  flex: none;
  display: flex;
  align-items: center;
  background: #535353;
  border-radius: 10px 10px 0 0;
  border-bottom: 2px solid #3a3a3a;
}
.lights { display: flex; gap: 16px; margin-left: 18px; }
.light { width: 24px; height: 24px; border-radius: 50%; position: relative; }
.red { background: #ee6a5f; }
.red::after { content: ""; position: absolute; left: 8px; top: 8px; width: 8px; height: 8px; border-radius: 50%; background: #5d0a08; }
.yellow { background: #f6bf50; }
.green { background: #61c454; }
.home { margin-left: 19px; }
.bar-div { width: 2px; height: 40px; background: #5f5f5f; margin-left: 23px; }
.arrange { margin-left: 17px; }
.chev-s { margin-left: 17px; }
.app-title {
  margin-left: 985px;
  width: 945px;
  font-size: 25px;
  color: #cdcdcd;
}
.bulb-div { margin-left: 14px; }
.workspace-name { margin-left: 35px; font-size: 24.500px; font-weight: 700; color: #e4e4e4; }
.ws-chev { margin-left: 21px; }
.ws-div { margin-left: 25px; height: 40px; }
.stock {
  margin-left: 13px;
  width: 371px;
  height: 40px;
  display: flex;
  align-items: center;
  gap: 7px;
  padding-left: 5px;
  background: #464646;
  border: 1px solid #5c5c5c;
  border-radius: 5px;
  color: #8f8f8f;
  font-size: 22.500px;
}

.workspace { flex: 1; min-height: 0; display: flex; }

/* tool strip */
.toolstrip { width: 82px; flex: none; display: flex; flex-direction: column; background: #3f3f3f; }
.strip-head { height: 24px; display: flex; align-items: center; padding-left: 7px; background: #424242; width: 78px; }
.tools {
  margin-top: 2px;
  width: 78px;
  flex: 1;
  background: #535353;
  border-left: 2px solid #454545;
  display: flex;
  flex-direction: column;
  align-items: center;
  padding-top: 8px;
}
.tools svg { margin-left: -2px; }
.grip { margin-bottom: 16px; }
.tool { width: 78px; height: 48px; flex: none; position: relative; display: flex; justify-content: center; }
.tool.active::before {
  content: "";
  position: absolute;
  left: 10px; top: 1px;
  width: 56px; height: 44px;
  background: #2f2f2f;
  border-radius: 5px;
}
.tool.active svg { position: relative; }
.tool-sep { width: 60px; height: 2px; background: #626262; margin: 4px 0 0; flex: none; }
.swap-row { display: flex; width: 64px; justify-content: space-between; margin-top: 11px; flex: none; }
.swap-row svg { margin: 0; }
.fillstroke { width: 60px; margin-top: 10px; flex: none; }
.fillstroke svg { margin: 0; }
.colormodes {
  display: flex;
  width: 56px; height: 20px;
  gap: 1px;
  padding: 1px 2px;
  background: #333;
  margin-top: 9px;
  flex: none;
}
.cm { flex: 1; }
.cm-black { background: #000; }
.cm-grad { background: linear-gradient(90deg, #fff, #555); }
.cm-none { background: linear-gradient(135deg, #fff 42%, #ee3124 43%, #ee3124 57%, #fff 58%); }
.tool.small { margin-top: 5px; }
.tool.dots { margin-top: 18px; }

/* document column */
.doc { flex: 1; min-width: 0; display: flex; flex-direction: column; background: #3f3f3f; }
.tabs { height: 58px; flex: none; display: flex; background: #424242; padding-left: 1px; }
.tab {
  display: flex;
  align-items: center;
  font-size: 21px;
  font-weight: 600;
  border-right: 1px solid #3a3a3a;
}
.tab-active { width: 517px; background: #535353; color: #e8e8e8; gap: 19px; padding-left: 18px; font-weight: 700; }
.tab-idle { width: 551px; color: #a8a8a8; gap: 20px; padding-left: 18px; }
.rlabels text { font-family: "Open Sans", sans-serif; font-size: 18px; fill: #b9b9b9; }
.rlabels-v text { text-anchor: middle; }
.canvas-row { flex: 1; min-height: 0; display: flex; }
.pasteboard { width: 157px; flex: none; background: #646464; border-right: 2px solid #000; }
.artboard { width: 2068px; flex: none; background: linear-gradient(180deg, #fff 96%, #f8f8f8 100%); }
.art-lines { fill: none; stroke: #000; stroke-width: 2; stroke-linejoin: round; }
.hinges { stroke-width: 1.800; }
.smart-label { font-family: "Liberation Sans", sans-serif; font-size: 17px; fill: #ee66f0; }
.petals { opacity: .88; }
.vscroll {
  width: 37px;
  flex: none;
  background: #535353;
  border-right: 6px solid #3a3a3a;
  display: flex;
  flex-direction: column;
  align-items: center;
  padding: 16px 0 12px;
}
.vthumb { width: 26px; height: 48px; border-radius: 13px; background: #6a6a6a; margin: 596px 0 auto; }

/* status bar */
.statusbar {
  height: 32px;
  flex: none;
  display: flex;
  align-items: center;
  margin-right: 6px;
  background: #474747;
  color: #dcdcdc;
  font-size: 21px;
  padding-left: 9px;
}
.field { height: 32px; background: #525252; border-radius: 4px 0 0 0; display: flex; align-items: center; padding: 6px 0 0 8px; }
.field-zoom { width: 102px; }
.field-page { width: 82px; }
.field-dd { width: 36px; height: 32px; background: #525252; border-left: 1px solid #434343; border-radius: 0 4px 0 0; display: flex; align-items: center; justify-content: center; }
.nav-a { margin: 0 11px 0 16px; }
.nav-b { margin: 0 0 0 22px; }
.status-msg { width: 405px; margin-left: 12px; height: 32px; background: #505050; text-align: center; color: #b5b5b5; line-height: 38px; flex: none; font-size: 21.500px; }
.msg-arrow { margin-left: 13px; }
.hs-left { margin-left: 22px; }
.hscroll { flex: 1; height: 32px; }
.hthumb { width: 49px; height: 32px; margin-left: 614px; background: #5a5a5a; border-radius: 12px; }
.hs-right { margin-right: 43px; }

/* right panels */
.panels { width: 503px; flex: none; display: flex; flex-direction: column; background: #535353; }
.panel-head { height: 24px; flex: none; display: flex; justify-content: flex-end; align-items: center; padding-right: 14px; background: #424242; border-bottom: 2px solid #3a3a3a; }
.panel-tabs { height: 54px; flex: none; display: flex; align-items: center; background: #424242; border-bottom: 2px solid #3a3a3a; font-size: 21px; font-weight: 600; color: #b5b5b5; }
.ptab { height: 52px; display: flex; align-items: center; padding: 0 0 0 19px; width: 143px; border-right: 1px solid #3a3a3a; }
.ptab-active { width: 102px; background: #535353; color: #ececec; height: 54px; margin-bottom: -2px; padding-left: 18px; }
.ptab-lib { width: 125px; padding-left: 18px; }
.pmenu { margin-left: 101px; }
.layers {
  flex: 1;
  margin: 14px 13px 8px 11px;
  border: 1px solid #484848;
  border-radius: 4px;
  padding-top: 1px;
  display: flex;
  flex-direction: column;
}
.layer {
  height: 42px;
  flex: none;
  display: grid;
  grid-template-columns: 41px 42px 62px 36px 1fr 72px;
  align-items: center;
  position: relative;
  border-bottom: 2px solid #484848;
  font-size: 20px;
  color: #dcdcdc;
}
.layer-sel { background: #4f6078; color: #e8e8e8; }
.cell { height: 100%; display: flex; align-items: center; justify-content: center; border-right: 1px solid #484848; }
.cell-tw { justify-content: flex-start; gap: 17px; padding-left: 2px; border-right: none; }
.cell-target { justify-content: flex-start; border-right: none; border-left: 1px solid #484848; padding-left: 14px; gap: 11px; }
.lname { padding-left: 9px; }
.swatch { width: 6px; height: 38px; }
.sw-green { background: #7ef56a; }
.sw-red { background: #ea5050; }
.sw-blue { background: #4f76ee; }
.target { width: 16px; height: 16px; border-radius: 50%; border: 1.5px solid #c3c3c3; }
.sel-mark { width: 12px; height: 12px; background: #7ef56a; border: 2px solid #000; }
.corner { position: absolute; right: 0; top: 0; width: 0; height: 0; border-top: 13px solid #dcdcdc; border-left: 12px solid transparent; }
.panel-foot {
  height: 40px;
  flex: none;
  display: flex;
  align-items: center;
  background: #4a4a4a;
  padding-left: 11px;
  color: #c3c3c3;
  font-size: 21px;
}
.panel-foot span { width: 137px; }

/* dock and wallpaper */
.desk {
  height: 140px;
  flex: none;
  width: 2880px;
  padding-left: 96px;
  background-color: #aeb0c2;
  background-repeat: no-repeat;
  background-size: 96px 100%, 96px 100%, 96px 100%, 100% 100%;
  background-image:
    linear-gradient(180deg, rgba(92,83,152,.95) 0%, rgba(120,110,170,.7) 16%, rgba(240,225,235,0) 38%),
    radial-gradient(ellipse 30px 40px at 25px 70px, #fff, rgba(255,255,255,0)),
    linear-gradient(90deg, #ecdfec 0 64%, #b5174f 74%, #c4225f 90%, #d8c4d8 97%, #a8aabd 100%),
    linear-gradient(90deg, #aeb0c2 0%, #b4b4c6 97%, #a6a9bb 98.500%, #b8b8c8 100%);
}
.dock {
  width: 2687px;
  height: 140px;
  display: flex;
  padding-left: 8px;
  border-radius: 14px 14px 0 0;
  background:
    radial-gradient(ellipse 260px 70px at 850px 140px, rgba(243,178,222,.75), transparent),
    radial-gradient(ellipse 300px 80px at 1500px 140px, rgba(244,208,232,.7), transparent),
    radial-gradient(ellipse 200px 70px at 1180px 0, rgba(170,170,210,.55), transparent),
    linear-gradient(90deg, #b3abd6 0%, #d3bed8 10%, #c8a8d0 20%, #dab3d8 30%, #d0b8d2 38%, #bcc0e0 45%, #d8c8e0 55%, #c8bcd8 62%, #bfc0dc 68%, #ccd0e2 78%, #c8c8dc 88%, #d6d6e6 100%);
}
.app { width: 116.800px; height: 140px; flex: none; position: relative; }
.app.running::after {
  content: "";
  position: absolute;
  left: 55.500px; top: 128px;
  width: 6px; height: 8px;
  border-radius: 50%;
  background: #3e3a62;
}
.dock-sep { width: 1px; height: 104px; margin: 18px 25px 0; background: #8b88a4; flex: none; }
.sep-b { margin-right: 25px; }
.badge {
  position: absolute;
  left: 87px; top: 12px;
  width: 40px; height: 40px;
  border-radius: 50%;
  background: #ea5a4f;
  color: #fff;
  font-family: "Inter", sans-serif;
  font-size: 22px;
  line-height: 40px;
  text-align: center;
}
.adobe {
  position: absolute;
  left: 8px; top: 13px;
  width: 101px; height: 99px;
  border-radius: 22px;
  display: flex;
  align-items: center;
  justify-content: center;
  font-family: "Liberation Sans", sans-serif;
  font-size: 62px;
  font-weight: 700;
}
.adobe-lr { background: #001e36; color: #31a8ff; }
.adobe-ai { background: #330000; color: #ff9a00; }
.cal-month { font-family: "Inter", sans-serif; font-size: 17px; fill: #fff; text-anchor: middle; }
.cal-day { font-family: "Inter", sans-serif; font-size: 50px; fill: #1a1a1a; text-anchor: middle; }
```
